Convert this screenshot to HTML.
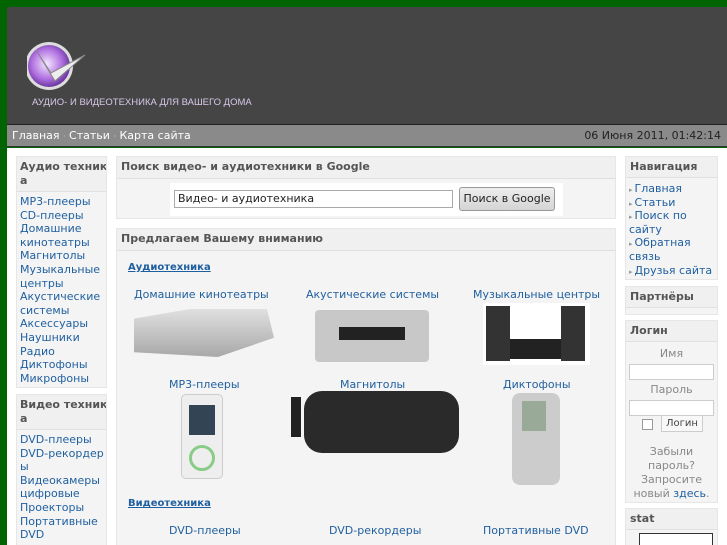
<!DOCTYPE html>
<html style="width:727px;height:545px;overflow:hidden"><head><meta charset="utf-8"><style>
*{margin:0;padding:0;box-sizing:border-box}
body{width:727px;height:545px;overflow:hidden;background:#006400;font-family:"DejaVu Sans","Liberation Sans",sans-serif;font-size:11px;position:relative}
.a{position:absolute}
#hdr{left:7px;top:7px;width:720px;height:118px;background:#454545;border-bottom:1px solid #222}
#nav{left:7px;top:125px;width:720px;height:22px;background:#8a8a8a;border-bottom:1px solid #333;color:#fff;font-size:11px;line-height:21px}
#main{left:7px;top:148px;width:720px;height:397px;background:#fff}
.box{position:absolute;background:#f4f4f4;border:1px solid #e6e6e6;overflow:hidden}
.h{background:#f0f0f0;border-bottom:1px solid #e0e0e0;font-weight:bold;color:#555;padding:3px 4px;line-height:14px}
a,.l{color:#1f5f9f;text-decoration:none}
.lst{padding:3px 3px;line-height:13.6px}
.c{text-align:center;color:#888;line-height:14px}
.ar{color:#999;font-size:7px;line-height:0;margin-right:2px}
.nw{white-space:nowrap}
</style></head><body>
<div id="hdr" class="a">
<svg class="a" style="left:20px;top:30px" width="64" height="56" viewBox="0 0 64 56">
<defs><radialGradient id="g" cx=".45" cy=".45" r=".6"><stop offset="0" stop-color="#f4e8ff"/><stop offset=".6" stop-color="#b070e0"/><stop offset="1" stop-color="#5a2a90"/></radialGradient></defs>
<circle cx="22" cy="29" r="24" fill="#ddd"/><circle cx="22" cy="29" r="21" fill="url(#g)"/>
<path d="M9 13 L24 36 L58 18 L28 44 Z" fill="#eee" stroke="#888" stroke-width="1"/>
</svg>
<div class="a" style="left:25px;top:90px;color:#d8c8e8;font-size:9.5px;font-family:'Liberation Sans',sans-serif">АУДИО- И ВИДЕОТЕХНИКА ДЛЯ ВАШЕГО ДОМА</div>
</div>
<div id="nav" class="a"><span style="padding-left:5px">Главная <span style="color:#ccc;font-size:8px">·</span> Статьи <span style="color:#ccc;font-size:8px">·</span> Карта сайта</span><span class="a" style="right:6px;top:0;color:#222">06 Июня 2011, 01:42:14</span></div>
<div id="main" class="a"></div>

<div class="box" style="left:16px;top:156px;width:91px;height:232px">
<div class="h nw" style="padding:3px 3px">Аудио техник<br>а</div>
<div class="lst l">MP3-плееры<br>CD-плееры<br>Домашние кинотеатры<br>Магнитолы<br>Музыкальные центры<br>Акустические системы<br>Аксессуары<br>Наушники<br>Радио<br>Диктофоны<br>Микрофоны</div></div>
<div class="box" style="left:16px;top:394px;width:91px;height:160px">
<div class="h nw" style="padding:3px 3px">Видео техник<br>а</div>
<div class="lst l"><span class="nw">DVD-плееры</span><br><span class="nw">DVD-рекордер</span><br>ы<br>Видеокамеры цифровые<br>Проекторы<br>Портативные DVD</div></div>

<div class="box" style="left:116px;top:156px;width:500px;height:63px">
<div class="h" style="padding:3px 4px 4px">Поиск видео- и аудиотехники в Google</div>
<div class="a" style="left:53px;top:26px;width:393px;height:33px;background:#fff"></div>
<div class="a" style="left:57px;top:33px;width:279px;height:18px;border:1px solid #aaa;background:#fff;color:#222;padding:1px 3px;line-height:14px">Видео- и аудиотехника</div>
<div class="a" style="left:342px;top:30px;width:96px;height:24px;border:1px solid #999;border-radius:3px;background:linear-gradient(#eee,#d4d4d4);color:#222;text-align:center;line-height:22px">Поиск в Google</div>
</div>

<div class="box" style="left:116px;top:228px;width:500px;height:330px">
<div class="h" style="padding:3px 4px 4px">Предлагаем Вашему вниманию</div>
<div class="a" style="left:11px;top:33px;font-weight:bold;font-size:10px;text-decoration:underline;color:#1f5f9f">Аудиотехника</div>
<div class="a l" style="left:17px;top:59px">Домашние кинотеатры</div>
<div class="a l" style="left:189px;top:59px">Акустические системы</div>
<div class="a l" style="left:356px;top:59px">Музыкальные центры</div>
<div class="a" style="left:17px;top:80px;width:140px;height:48px;background:linear-gradient(#e0e0e0,#a8a8a8);clip-path:polygon(0 20%,40% 0,95% 0,100% 60%,60% 100%,0 90%)"></div>
<div class="a" style="left:198px;top:81px;width:114px;height:52px;background:#c8c8c8;border-radius:4px"><div class="a" style="left:24px;top:17px;width:66px;height:13px;background:#222"></div></div>
<div class="a" style="left:366px;top:74px;width:107px;height:62px;background:#fff"><div class="a" style="left:3px;top:3px;width:24px;height:55px;background:#333"></div><div class="a" style="left:78px;top:3px;width:24px;height:55px;background:#333"></div><div class="a" style="left:27px;top:36px;width:51px;height:20px;background:#222"></div></div>
<div class="a l" style="left:52px;top:149px">MP3-плееры</div>
<div class="a l" style="left:223px;top:149px">Магнитолы</div>
<div class="a l" style="left:386px;top:149px">Диктофоны</div>
<div class="a" style="left:64px;top:165px;width:42px;height:85px;background:#eee;border-radius:5px;border:1px solid #ccc"><div class="a" style="left:7px;top:10px;width:26px;height:30px;background:#345"></div><div class="a" style="left:7px;top:50px;width:26px;height:26px;border-radius:50%;border:3px solid #8c8"></div></div>
<div class="a" style="left:174px;top:168px;width:10px;height:40px;background:#222"></div>
<div class="a" style="left:187px;top:162px;width:155px;height:62px;background:#2a2a2a;border-radius:18px"></div>
<div class="a" style="left:395px;top:164px;width:48px;height:92px;background:#ccc;border-radius:8px"><div class="a" style="left:10px;top:8px;width:24px;height:30px;background:#9a9"></div></div>
<div class="a" style="left:11px;top:269px;font-weight:bold;font-size:10px;text-decoration:underline;color:#1f5f9f">Видеотехника</div>
<div class="a l" style="left:52px;top:295px">DVD-плееры</div>
<div class="a l" style="left:212px;top:295px">DVD-рекордеры</div>
<div class="a l" style="left:366px;top:295px">Портативные DVD</div>
</div>

<div class="box" style="left:625px;top:156px;width:93px;height:124px">
<div class="h">Навигация</div>
<div class="lst l" style="padding:4px 3px"><span class="ar">▸</span>Главная<br><span class="ar">▸</span>Статьи<br><span class="ar">▸</span>Поиск по сайту<br><span class="ar">▸</span>Обратная связь<br><span class="ar">▸</span>Друзья сайта</div></div>
<div class="box" style="left:625px;top:286px;width:93px;height:29px">
<div class="h">Партнёры</div></div>
<div class="box" style="left:625px;top:320px;width:93px;height:183px">
<div class="h">Логин</div>
<div class="c" style="margin-top:5px">Имя</div>
<div style="margin:3px 3px;height:16px;border:1px solid #ccc;background:#fff"></div>
<div class="c">Пароль</div>
<div style="margin:3px 3px;height:16px;border:1px solid #ccc;background:#fff"></div>
<div class="a" style="left:16px;top:98px;width:11px;height:11px;border:1px solid #999;background:#fff"></div>
<div class="a" style="left:35px;top:94px;width:42px;height:17px;border:1px solid #ccc;background:#f8f8f8;color:#444;font-size:10px;text-align:center;line-height:15px">Логин</div>
<div class="c a" style="left:0;top:124px;width:91px">Забыли пароль? Запросите новый <span class="l">здесь</span>.</div>
</div>
<div class="box" style="left:625px;top:508px;width:93px;height:40px">
<div class="h">stat</div>
<div class="a" style="left:13px;top:24px;width:74px;height:14px;border:1px solid #333;background:#fff"></div></div>
</body></html>
